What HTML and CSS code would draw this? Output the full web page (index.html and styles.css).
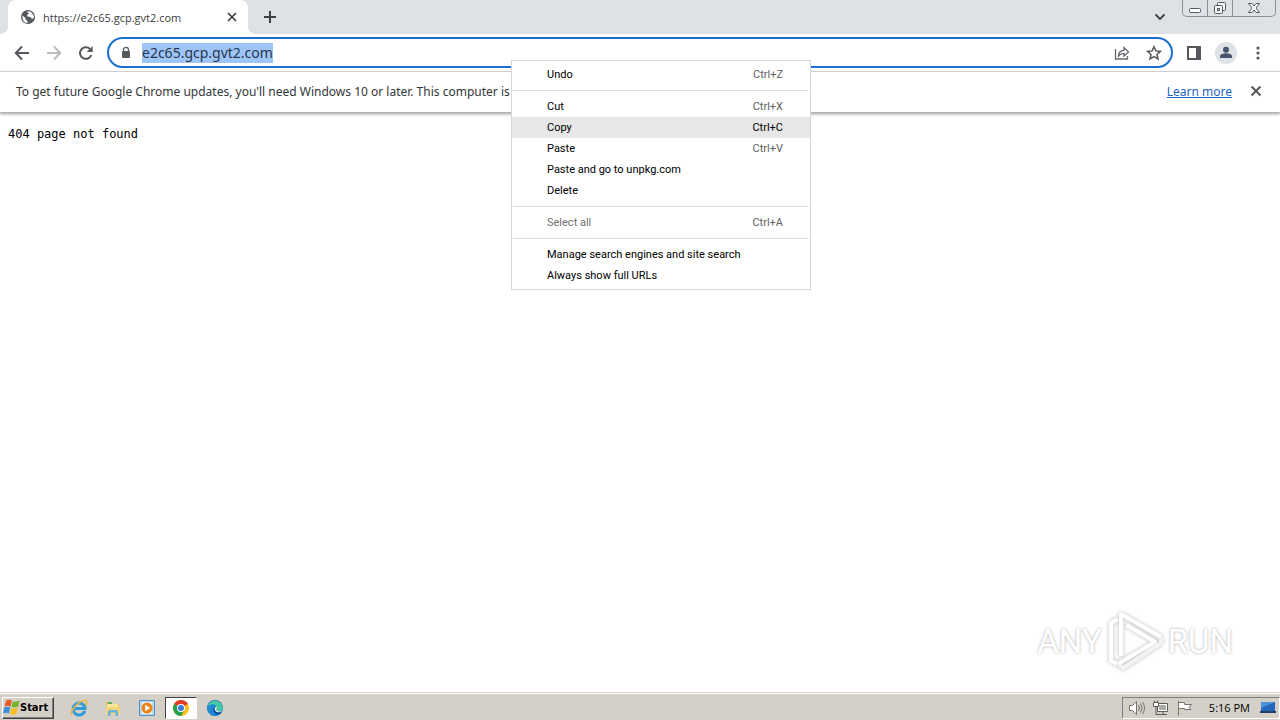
FILE: index.html
```html
<!DOCTYPE html>
<html lang="en">
<head>
  <meta charset="UTF-8">
  <meta name="viewport" content="width=device-width, initial-scale=1.0">
  <title>e2c65.gcp.gvt2.com</title>
  <link rel="stylesheet" href="styles.css">
</head>
<body>

  <header class="tab-strip">
    <div class="tab">
      <svg class="icon" width="16" height="16" viewBox="0 0 16 16"><circle cx="8" cy="8" r="7" fill="#55585c"/><path d="M2.500 6.500l3 2.500v1.500l2 1.500v2C4 13.800 2 11 2.500 6.500z" fill="#fff"/><path d="M6.500 2.500h4L13.500 6l.5 2.500-2 1.500-1.500-2-3-.5L7 6l2-1.500z" fill="#fff"/></svg>
      <span class="tab-title">https://e2c65.gcp.gvt2.com</span>
      <button class="icon-btn tab-close" aria-label="Close tab">
        <svg width="10" height="10" viewBox="0 0 10 10" fill="none" stroke="#3c4043" stroke-width="1.700"><path d="M1 1l8 8M9 1l-8 8"/></svg>
      </button>
    </div>
    <button class="icon-btn new-tab" aria-label="New tab">
      <svg width="14" height="14" viewBox="0 0 14 14" fill="none" stroke="#3c4043" stroke-width="2"><path d="M7 1v12M1 7h12"/></svg>
    </button>
    <button class="icon-btn tab-search" aria-label="Search tabs">
      <svg width="12" height="8" viewBox="0 0 12 8" fill="none" stroke="#3c4043" stroke-width="1.800"><path d="M1.500 1.500L6 6l4.500-4.500"/></svg>
    </button>
    <div class="window-controls">
      <button aria-label="Minimize">
        <svg width="14" height="14" viewBox="0 0 14 14" fill="#fff" stroke="#55585f"><rect x="1.500" y="7.500" width="11" height="4" rx="1"/></svg>
      </button>
      <button aria-label="Restore">
        <svg width="14" height="14" viewBox="0 0 14 14" fill="#f5f6f8" stroke="#55585f"><rect x="4.500" y="1.500" width="8" height="8" rx="1"/><rect x="1.500" y="4.500" width="8" height="8" rx="1"/><rect x="4.500" y="7.500" width="2" height="2"/></svg>
      </button>
      <button class="window-close" aria-label="Close">
        <svg width="14" height="12" viewBox="0 0 14 12" fill="#fff" stroke="#55585f"><path d="M1.500 1.500h3.500L7 4l2-2.500h3.500L9 6l3.500 4.500H9L7 8l-2 2.500H1.500L5 6z"/></svg>
      </button>
    </div>
  </header>

  <nav class="toolbar">
    <button class="icon-btn" aria-label="Back">
      <svg width="16" height="16" viewBox="0 0 16 16" fill="none" stroke="#55585c" stroke-width="2"><path d="M15 8H2M8 1.500L1.800 8 8 14.500"/></svg>
    </button>
    <button class="icon-btn" aria-label="Forward">
      <svg width="16" height="16" viewBox="0 0 16 16" fill="none" stroke="#babcbe" stroke-width="2"><path d="M1 8h13M8 1.500L14.200 8 8 14.500"/></svg>
    </button>
    <button class="icon-btn" aria-label="Reload">
      <svg width="16" height="16" viewBox="0 0 16 16"><path d="M13.300 10A5.800 5.800 0 1 1 12 4" fill="none" stroke="#55585c" stroke-width="2"/><path d="M14.700 1v6H8.700z" fill="#55585c"/></svg>
    </button>
    <div class="address-bar">
      <svg class="icon" width="10" height="14" viewBox="0 0 10 14"><path d="M2.500 6V3.800a2.500 2.500 0 0 1 5 0V6" fill="none" stroke="#55585c" stroke-width="1.300"/><rect x="1" y="5" width="8" height="7" rx="1" fill="#55585c"/></svg>
      <input class="url" type="text" size="18" value="e2c65.gcp.gvt2.com" aria-label="Address" spellcheck="false">
      <button class="icon-btn share" aria-label="Share">
        <svg width="16" height="16" viewBox="0 0 16 16" fill="none" stroke="#65686c" stroke-width="1.300"><path d="M1.500 4v10h12v-3"/><path d="M4.500 11C4.500 7.500 6 5.500 10 5.300V2.500L14.500 7 10 11V8.300C7.500 8.300 6 9 4.500 11z"/></svg>
      </button>
      <button class="icon-btn" aria-label="Bookmark">
        <svg width="16" height="16" viewBox="0 0 16 16" fill="none" stroke="#55585c" stroke-width="1.500"><path d="M8 1.700l1.900 4.200 4.600.5L11 9.500l1 4.500-4-2.400L4 14l1-4.500-3.500-3.100 4.600-.5z"/></svg>
      </button>
    </div>
    <button class="icon-btn" aria-label="Side panel">
      <svg width="14" height="14" viewBox="0 0 14 14" fill="#55585c"><path fill-rule="evenodd" d="M0 0h14v14H0zM2 2v10h7V2z"/></svg>
    </button>
    <button class="icon-btn profile" aria-label="Profile">
      <svg width="22" height="22" viewBox="0 0 22 22"><circle cx="11" cy="11" r="11" fill="#dee1e6"/><circle cx="11" cy="7.800" r="3" fill="#47526c"/><path d="M5 16v-1.500c0-2.200 3-3.300 6-3.300s6 1.100 6 3.300V16z" fill="#47526c"/></svg>
    </button>
    <button class="icon-btn" aria-label="Menu">
      <svg width="4" height="14" viewBox="0 0 4 14" fill="#55585c"><circle cx="2" cy="2" r="1.600"/><circle cx="2" cy="7" r="1.600"/><circle cx="2" cy="12" r="1.600"/></svg>
    </button>
  </nav>

  <div class="infobar">
    <p>To get future Google Chrome updates, you'll need Windows 10 or later. This computer is using Windows 7.</p>
    <a href="#">Learn more</a>
    <button class="icon-btn" aria-label="Dismiss">
      <svg width="12" height="12" viewBox="0 0 12 12" fill="none" stroke="#55585c" stroke-width="2"><path d="M1.500 1.500l9 9M10.500 1.500l-9 9"/></svg>
    </button>
  </div>

  <main class="page">
    <pre>404 page not found</pre>
    <div class="watermark">
      <span>ANY</span>
      <svg width="58" height="62" viewBox="0 0 58 62" fill="none" stroke="#fff" stroke-width="4" stroke-linejoin="round">
        <path d="M12 9L5 13V51L11 54"/>
        <path d="M15 46V4L55 27"/>
        <path d="M21 15L49 32 12 54"/>
        <path d="M55 27V33L17 58 12 54" stroke="#f3f3f3"/>
      </svg>
      <span>RUN</span>
    </div>
  </main>

  <div class="context-menu" role="menu">
    <button class="menu-item" role="menuitem">Undo <kbd>Ctrl+Z</kbd></button>
    <hr>
    <button class="menu-item" role="menuitem">Cut <kbd>Ctrl+X</kbd></button>
    <button class="menu-item active" role="menuitem">Copy <kbd>Ctrl+C</kbd></button>
    <button class="menu-item" role="menuitem">Paste <kbd>Ctrl+V</kbd></button>
    <button class="menu-item" role="menuitem">Paste and go to unpkg.com</button>
    <button class="menu-item" role="menuitem">Delete</button>
    <hr>
    <button class="menu-item" role="menuitem" disabled>Select all <kbd>Ctrl+A</kbd></button>
    <hr>
    <button class="menu-item" role="menuitem">Manage search engines and site search</button>
    <button class="menu-item" role="menuitem">Always show full URLs</button>
  </div>

  <footer class="taskbar">
    <button class="start">
      <svg width="17" height="17" viewBox="0 0 16 16"><path d="M3 1.500Q5.500 0 8.300 1.500L7 7Q4.500 5.800 1.500 7z" fill="#e8582a"/><path d="M9.200 2q2.800 1.400 6.600-.5L14.300 7Q10.800 8.700 7.900 7.400z" fill="#79b52c"/><path d="M1.200 8Q4 6.800 6.800 8l-1.200 5.500Q3 12.200 0 13.500z" fill="#3b8fd9"/><path d="M7.700 8.500q2.800 1.200 6.300-.2L12.700 14q-3.400 1.500-6.300.2z" fill="#f8be26"/></svg>
      Start
    </button>
    <button class="task" aria-label="Internet Explorer">
      <svg width="18" height="18" viewBox="0 0 18 18" fill="none"><path d="M14.800 12A6 6 0 1 1 15 8.800v.7H5" stroke="#329bd9" stroke-width="3"/><path d="M2 16C-1 12 8 3 14 1.500c4-1 3 3 1.500 5" stroke="#e9b738" stroke-width="1.500"/></svg>
    </button>
    <button class="task" aria-label="Windows Explorer">
      <svg width="18" height="18" viewBox="0 0 18 18"><path d="M2 3h6l1 2h6v10H2z" fill="#e6bd51"/><path d="M3 5h11v8H3z" fill="#f7e8a0"/><path d="M4 4h4" stroke="#5cad58" stroke-width="2"/><path d="M2 8h14v7H2z" fill="#f3d777"/><path d="M4 17v-4q0-2 2-2h6q2 0 2 2v4h-2.500v-3.500h-5V17z" fill="#68b2dc"/></svg>
    </button>
    <button class="task" aria-label="Media Player">
      <svg width="18" height="18" viewBox="0 0 18 18"><path d="M1.500 1.500h15v15h-15z" fill="#b7daf1" stroke="#4c8fc4"/><path d="M4 3h10v12H4z" fill="#e6f1f8"/><circle cx="9" cy="9" r="5.500" fill="#ef8318"/><path d="M7.200 5.800v6.400L12 9z" fill="#fff"/></svg>
    </button>
    <button class="task pressed" aria-label="Google Chrome">
      <svg width="16" height="16" viewBox="0 0 16 16"><circle cx="8" cy="8" r="8" fill="#fbc116"/><path d="M8 8L1.100 4A8 8 0 0 1 14.900 4z" fill="#e33b2e"/><path d="M1.100 4A8 8 0 0 0 8 16l3.400-6L8 8z" fill="#26a148"/><circle cx="8" cy="8" r="4" fill="#fff"/><circle cx="8" cy="8" r="3" fill="#377de2"/></svg>
    </button>
    <button class="task" aria-label="Microsoft Edge">
      <svg width="16" height="16" viewBox="0 0 16 16"><circle cx="8" cy="8" r="8" fill="#176fc0"/><path d="M.5 6A8 8 0 0 1 16 8c0 2.500-2 3.500-4 3.500-2 0-2.500-1-2-2C11 7 7 4 .5 6z" fill="#47c9a2"/><path d="M0 8c1-4 8-5 9.500-1.500C6 5.500 4 9 6 12q1.500 2.500 4 3.500A8 8 0 0 1 0 8z" fill="#2189d5"/><path d="M8.500 7.500c-2 1.500-.5 5 3 5q2 0 3.300-.8-.8 1.500-2 2.300C8 15 5 9.500 8.500 7.500z" fill="#0d438c"/><path d="M9.500 9c.5-.8.500-1.500 0-2.200-2.500.2-2.500 5.200 2 5.500q2 .2 3.800-1.300c-2 1-6.500.700-5.800-2z" fill="#fff"/></svg>
    </button>

    <div class="tray">
      <svg width="18" height="16" viewBox="0 0 18 16" fill="#fff" stroke="#77746e"><path d="M1.500 5.500h3l4-4v13l-4-4h-3z"/><path d="M10.500 5q2 3 0 6M12.500 3.500q3 4.500 0 9M14.500 2q4 6 0 12" fill="none"/></svg>
      <svg width="18" height="16" viewBox="0 0 18 16" fill="#fff" stroke="#5f5c57"><path d="M5.500 3.500h10v8h-10z"/><path d="M7.500 5.500h6v4h-6z" fill="#aaa8a3" stroke="#aaa8a3"/><path d="M7 14.500h8M11 12v2"/><path d="M1.500 2.500h5v4h-5zM2.500.5v2M5.500.5v2"/><path d="M4 7v7.500h3" fill="none"/></svg>
      <svg width="18" height="16" viewBox="0 0 18 16" fill="#fff" stroke="#77746e"><path d="M2.500 1v14.500"/><path d="M2.500 2.500h6v2h7L13 7.500l2 2H8.500v-1h-6z"/></svg>
      <time>5:16 PM</time>
      <svg class="desktop-icon" width="16" height="14" viewBox="0 0 16 14"><path d="M1 1h14v9H1z" fill="#2467bd"/><path d="M1 1h14L1 7z" fill="#4b91dc"/><path d="M0 10h16v2H0z" fill="#243f68"/></svg>
    </div>
  </footer>

</body>
</html>
```
FILE: styles.css
```css
* {
  margin: 0;
  padding: 0;
  box-sizing: border-box;
}

body {
  min-height: 100vh;
  display: flex;
  flex-direction: column;
  background: #fff;
  color: #000;
  font-family: "Open Sans", "Noto Sans", sans-serif;
  font-size: 11px;
}

button {
  font: inherit;
  color: inherit;
  border: none;
  background: none;
}

svg {
  display: block;
  flex-shrink: 0;
}

.icon-btn {
  display: flex;
  align-items: center;
  justify-content: center;
  width: 32px;
  height: 28px;
}

/* tabs */
.tab-strip {
  display: flex;
  align-items: center;
  height: 34px;
  padding-left: 8px;
  background: #dee1e6;
}

.tab {
  position: relative;
  display: flex;
  align-items: center;
  gap: 7px;
  width: 240px;
  height: 34px;
  padding: 0 8px 0 12px;
  border-radius: 8px 8px 0 0;
  background: #fff;
}

/* curved feet of the tab */
.tab::before,
.tab::after {
  content: "";
  position: absolute;
  bottom: 0;
  width: 8px;
  height: 8px;
}

.tab::before {
  right: 100%;
  background: radial-gradient(circle at 0 0, #dee1e6 8px, #fff 8px);
}

.tab::after {
  left: 100%;
  background: radial-gradient(circle at 100% 0, #dee1e6 8px, #fff 8px);
}

.tab-title {
  flex: 1;
  color: #3c4043;
}

.tab-close {
  width: 16px;
}

.new-tab {
  margin-left: 6px;
}

.tab-search {
  margin-left: auto;
  margin-right: 6px;
}

.window-controls {
  display: flex;
  align-self: flex-start;
  height: 17px;
  margin-right: 4px;
  border: 1px solid #8c9097;
  border-top: none;
  border-radius: 0 0 5px 5px;
}

.window-controls button {
  display: flex;
  align-items: center;
  justify-content: center;
  width: 25px;
  border-right: 1px solid #8c9097;
}

.window-controls .window-close {
  width: 42px;
  border-right: none;
}

/* toolbar */
.toolbar {
  display: flex;
  align-items: center;
  height: 38px;
  padding: 0 6px;
  background: #fff;
  border-bottom: 1px solid #dadce0;
}

.address-bar {
  flex: 1;
  display: flex;
  align-items: center;
  height: 31px;
  margin: 0 5px;
  padding: 0 1px 0 12px;
  border: 2px solid #1b6fd0;
  border-radius: 16px;
}

.url {
  field-sizing: content;
  height: 20px;
  margin-left: 11px;
  border: none;
  outline: none;
  background: #9fc5f8;
  color: #25364d;
  font-size: 14px;
}

.url,
.infobar {
  font-family: "Noto Sans", "Open Sans", sans-serif;
}

.share {
  margin-left: auto;
}

/* update notice */
.infobar {
  display: flex;
  align-items: center;
  height: 41px;
  padding: 0 8px 2px 16px;
  border-bottom: 1px solid #b4b4b4;
  box-shadow: 0 1px 3px #999;
  color: #333639;
  font-size: 12px;
}

.infobar p {
  flex: 1;
}

.infobar a {
  margin-right: 8px;
  color: #1a66c2;
}

/* page */
.page {
  flex: 1;
  display: flex;
  flex-direction: column;
  justify-content: space-between;
  padding: 13px 8px 20px;
}

.page pre {
  font-family: "DejaVu Sans Mono", monospace;
  font-size: 12px;
  line-height: 16px;
}

.watermark {
  display: flex;
  align-items: center;
  align-self: flex-end;
  gap: 4px;
  margin-right: 39px;
  color: #fff;
  font-family: Roboto, "Liberation Sans", sans-serif;
  font-size: 33px;
  text-shadow: 0 0 3px #aaa;
}

.watermark svg {
  filter: drop-shadow(0 0 2px #bbb);
}

/* right-click menu, lies over the page */
.context-menu {
  position: absolute;
  top: 60px;
  left: 511px;
  width: 300px;
  padding: 3px 0;
  border: 1px solid #d6d6d6;
  background: #fff;
  font-family: Roboto, "Liberation Sans", sans-serif;
}

.menu-item {
  display: flex;
  align-items: center;
  justify-content: space-between;
  width: 100%;
  height: 21px;
  padding: 0 27px 0 35px;
}

.menu-item kbd {
  font: inherit;
  color: #606060;
}

.menu-item.active {
  background: #e7e7e7;
}

.menu-item.active kbd {
  color: #000;
}

.menu-item:disabled {
  color: #707070;
}

.context-menu hr {
  margin: 5px 1px;
  border: none;
  border-top: 1px solid #dcdcdc;
}

/* taskbar */
.taskbar {
  display: flex;
  align-items: center;
  height: 28px;
  padding: 2px 0 0 2px;
  border-top: 1px solid #d4d0c8;
  background: #d4d0c8;
  box-shadow: inset 0 1px 0 #fff;
}

.start {
  display: flex;
  align-items: center;
  width: 52px;
  height: 22px;
  margin-right: 9px;
  border: 1px solid;
  border-color: #fff #404040 #404040 #fff;
  box-shadow: inset -1px -1px 0 #808080;
  font-family: "DejaVu Sans Condensed", "DejaVu Sans", sans-serif;
  font-weight: bold;
}

.task {
  display: flex;
  align-items: center;
  justify-content: center;
  width: 32px;
  height: 22px;
  margin-right: 2px;
}

.task.pressed {
  border: 1px solid;
  border-color: #404040 #fff #fff #404040;
  background: #fff;
}

.tray {
  display: flex;
  align-items: center;
  gap: 6px;
  height: 22px;
  margin-left: auto;
  padding: 0 3px 0 5px;
  border: 1px solid;
  border-color: #808080 #fff #fff #808080;
}

.tray time {
  margin: 0 4px 0 9px;
}
```
